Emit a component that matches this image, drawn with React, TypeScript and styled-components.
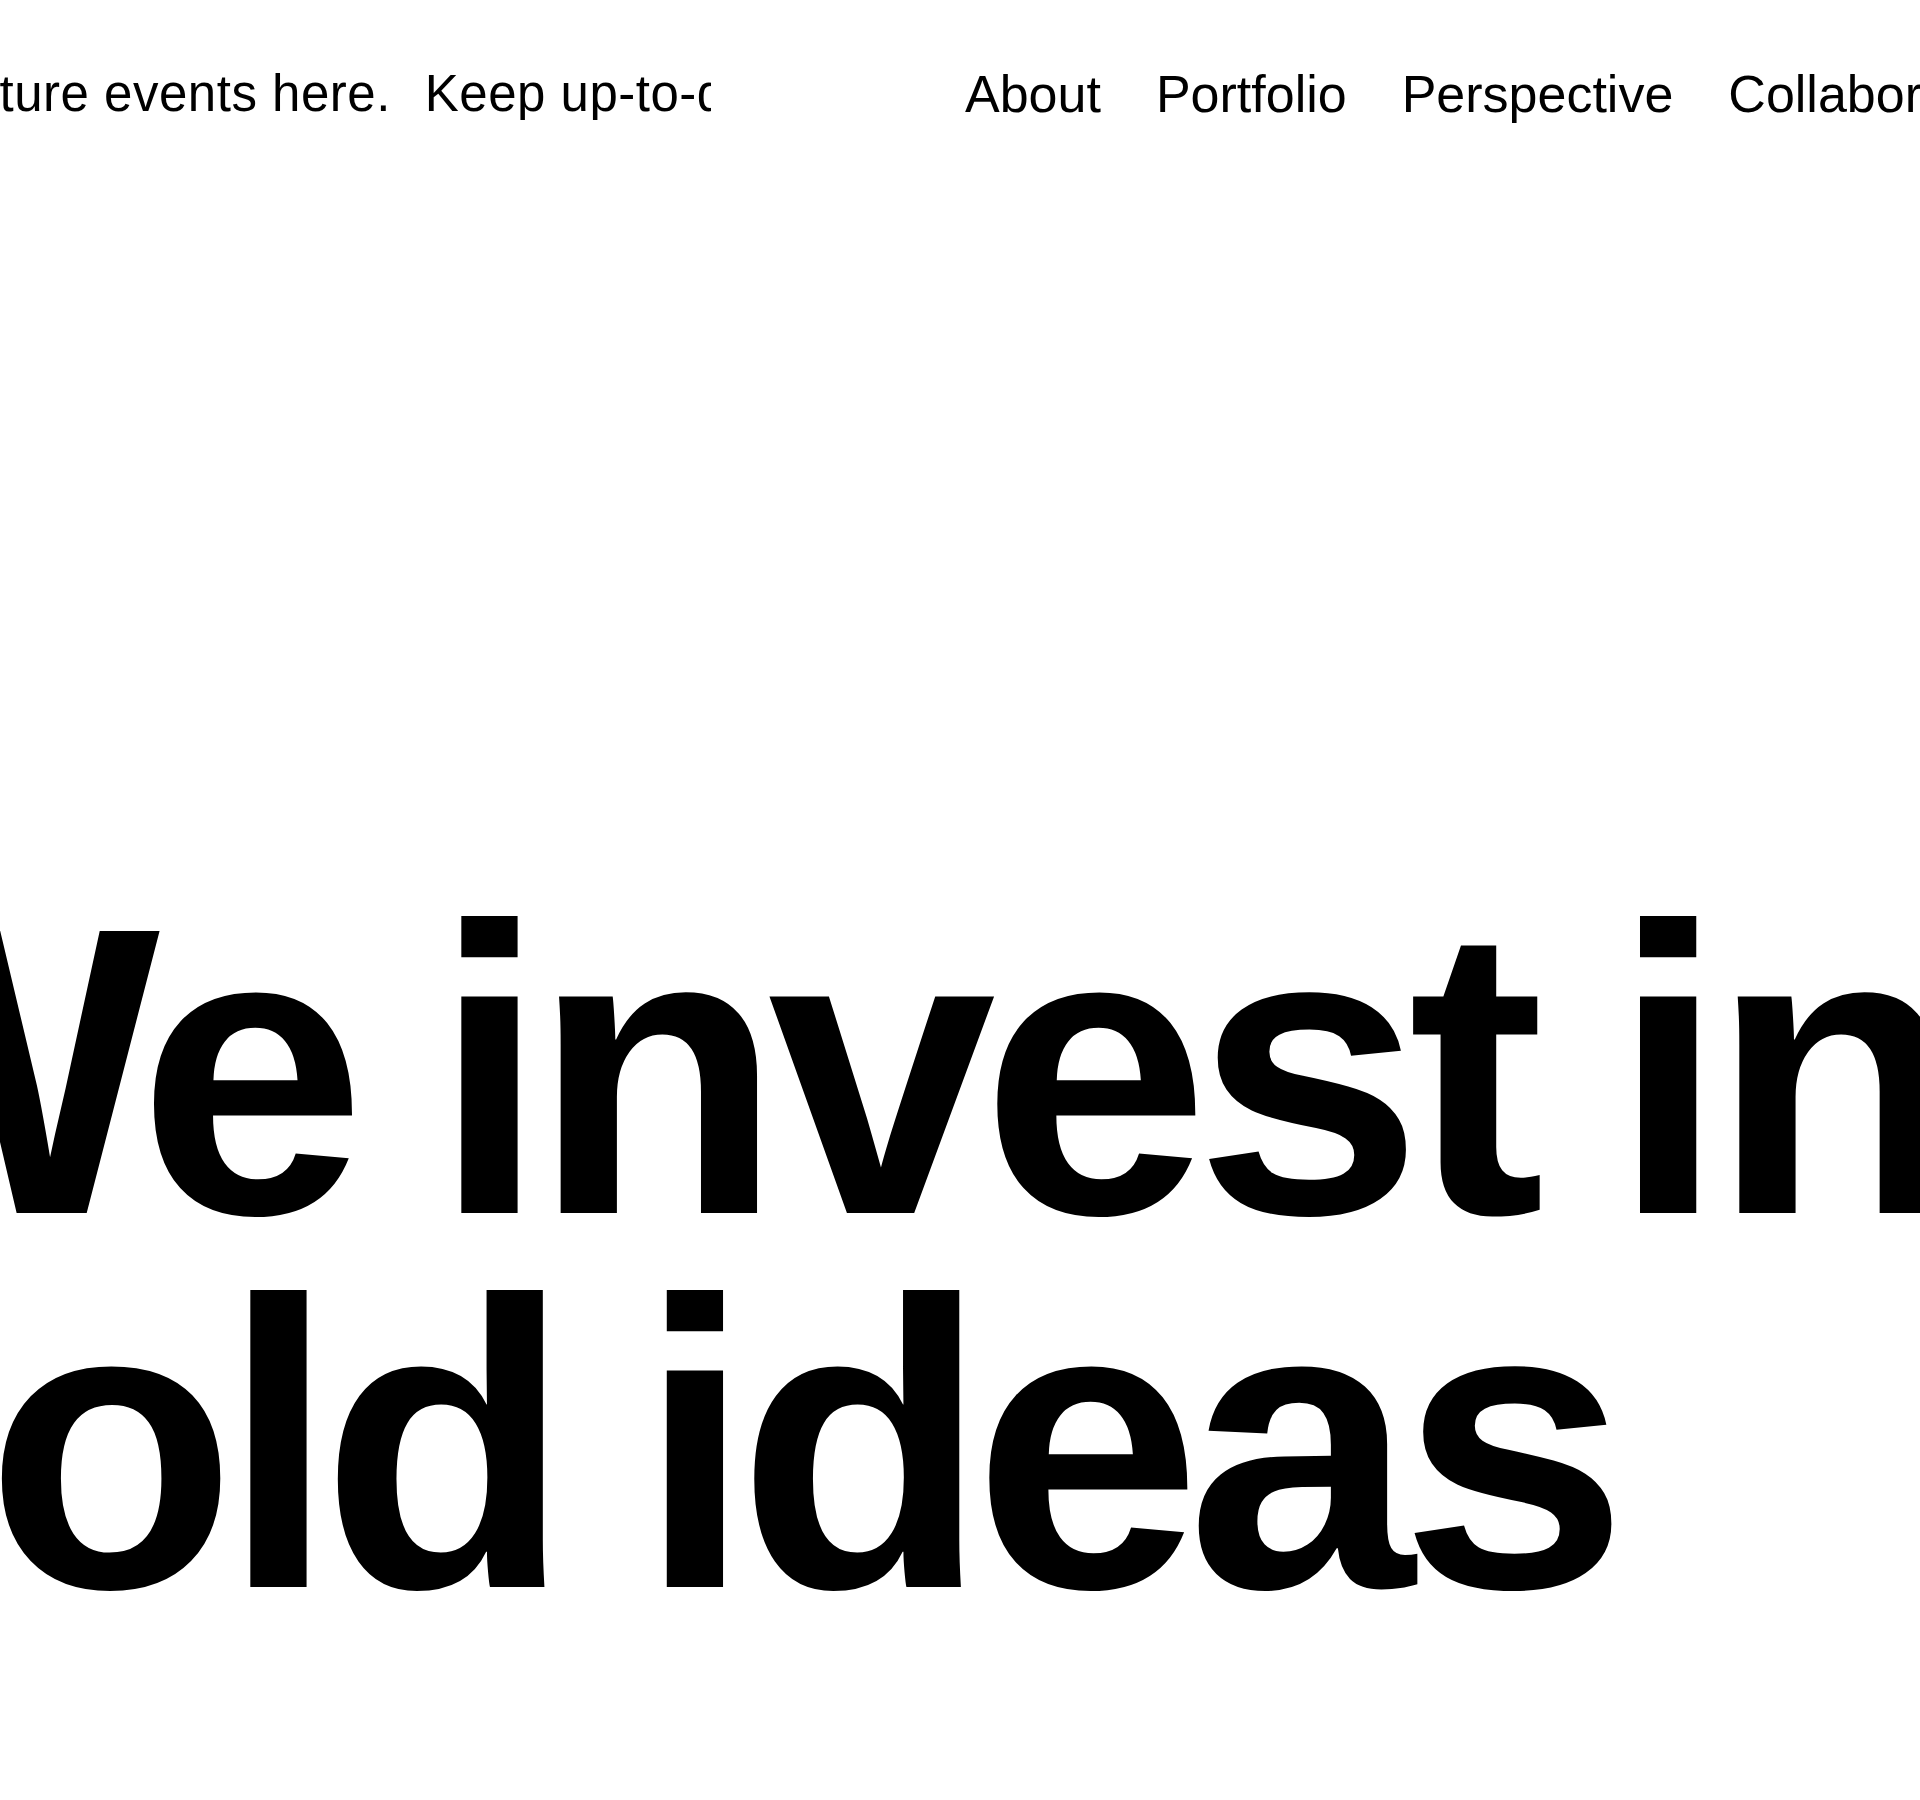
import styled, { createGlobalStyle } from 'styled-components';

const GlobalStyle = createGlobalStyle`
  html, body {
    margin: 0;
    padding: 0;
    background: #ffffff;
  }
  body {
    font-family: "Liberation Sans", Arial, sans-serif;
    color: #000;
    overflow: hidden;
  }
`;

const tickerItems = ['Discover future events here.', 'Keep up-to-date with our news.'];

const navLinks = ['About', 'Portfolio', 'Perspective', 'Collaborate'];

function App() {
  return (
    <>
      <GlobalStyle />
      <Page>
        <Header>
          <Ticker>
            <TickerTrack>
              {tickerItems.map((item, i) => (
                <TickerItem key={i}>{item}</TickerItem>
              ))}
            </TickerTrack>
          </Ticker>
          <Nav>
            {navLinks.map((link) => (
              <NavLink key={link} href="#">
                {link}
              </NavLink>
            ))}
          </Nav>
        </Header>
        <Hero>
          <Headline>
            <Line $indent={23}>We invest in</Line>
            <Line>bold ideas</Line>
          </Headline>
        </Hero>
      </Page>
    </>
  );
}

export default App;

const Page = styled.div`
  width: 1920px;
  height: 1800px;
  display: flex;
  flex-direction: column;
  overflow: hidden;
`;

const Header = styled.header`
  display: flex;
  align-items: flex-start;
  padding-top: 68px;
  height: 52px;
  gap: 254px;
`;

const Ticker = styled.div`
  width: 711px;
  flex-shrink: 0;
  overflow: hidden;
  white-space: nowrap;
`;

// marquee is mid-scroll in the screenshot
const TickerTrack = styled.div`
  display: flex;
  gap: 34px;
  transform: translateX(-261px);
`;

const TickerItem = styled.span`
  font-size: 51px;
  line-height: 52px;
  letter-spacing: 0.5px;
  flex-shrink: 0;
`;

const Nav = styled.nav`
  display: flex;
  gap: 55px;
  white-space: nowrap;
`;

const NavLink = styled.a`
  font-size: 52px;
  line-height: 52px;
  color: #000;
  text-decoration: none;
  flex-shrink: 0;
`;

const Hero = styled.section`
  flex: 1;
  display: flex;
  flex-direction: column;
  justify-content: flex-end;
  padding-bottom: 168px;
`;

const Headline = styled.h1`
  margin: 0 0 0 -250px;
  font-family: "Liberation Sans", Arial, sans-serif;
  font-weight: 700;
  font-size: 410px;
  line-height: 374px;
  letter-spacing: -14.6px;
  word-spacing: -18px;
  color: #000;
  white-space: nowrap;
`;

const Line = styled.span<{ $indent?: number }>`
  display: block;
  padding-left: ${(p) => p.$indent ?? 0}px;
`;
